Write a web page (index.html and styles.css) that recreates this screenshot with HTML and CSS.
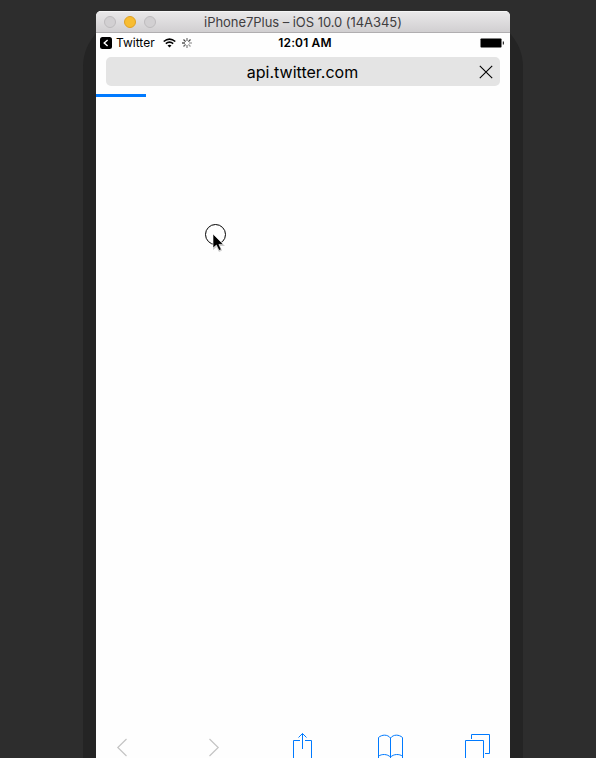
FILE: index.html
```html
<!DOCTYPE html>
<html lang="en">
<head>
<meta charset="utf-8">
<title>iPhone7Plus – iOS 10.0 (14A345)</title>
<link rel="stylesheet" href="styles.css">
</head>
<body>
<main class="device">
  <section class="window">
    <header class="titlebar">
      <div class="lights"><i class="light"></i><i class="light minimize"></i><i class="light"></i></div>
      <span class="title">iPhone7Plus – iOS 10.0 (14A345)</span>
    </header>
    <div class="statusbar">
      <div class="status-left">
        <svg class="back" width="12" height="12" viewBox="0 0 12 12"><rect width="12" height="12" rx="2.5"/><path d="M7.6 3L4.2 6l3.4 3" fill="none" stroke="#fff" stroke-width="1.4"/></svg>
        <span class="app">Twitter</span>
        <svg class="wifi" width="13" height="10" viewBox="0 0 13 10" fill="none" stroke="#000" stroke-width="1.6"><path d="M.7 3.5Q6.5-1.4 12.3 3.5M2.8 5.7q3.7-3 7.4 0"/><path d="M4.5 7.4q2-1.5 4 0l-2 2z" fill="#000" stroke="none"/></svg>
        <svg class="spinner" width="10" height="10" viewBox="-5 -5 10 10" stroke-width="1.3"><path d="M0-2V-5" stroke="#777"/><path d="M1.4-1.4l2.1-2.1" stroke="#444"/><path d="M2 0h3" stroke="#aaa"/><path d="M1.4 1.4l2.1 2.1" stroke="#999"/><path d="M0 2v3" stroke="#888"/><path d="M-1.4 1.4l-2.1 2.1" stroke="#666"/><path d="M-2 0h-3" stroke="#555"/><path d="M-1.4-1.4l-2.1-2.1" stroke="#444"/></svg>
      </div>
      <span class="time">12:01 AM</span>
      <svg class="battery" width="24" height="10" viewBox="0 0 24 10"><rect x=".5" y=".5" width="21" height="9" rx=".8"/><path d="M22.8 3.6h1v3h-1z"/></svg>
    </div>
    <div class="address">
      <span class="url">api.twitter.com</span>
      <svg class="close" width="14" height="14" viewBox="0 0 14 14" stroke="#000" stroke-width="1.1"><path d="M.8.8l12.4 12.4M13.2.8L.8 13.2"/></svg>
    </div>
    <div class="progress"></div>
    <div class="page"></div>
    <nav class="toolbar">
      <svg width="12" height="28" viewBox="0 0 12 28" fill="none" stroke="#c4c4c4" stroke-width="1.2"><path d="M10.5 9L1.8 17.5l8.7 8.5"/></svg>
      <svg width="12" height="28" viewBox="0 0 12 28" fill="none" stroke="#c4c4c4" stroke-width="1.2"><path d="M1.5 9l8.7 8.5L1.5 26"/></svg>
      <svg width="20" height="28" viewBox="0 0 20 28" fill="none" stroke="#007aff"><path d="M7 10.5H.5V30M12 10.5h6.5V30M9.5 19V3.5M5.5 7.5l4-4 4 4"/></svg>
      <svg width="26" height="28" viewBox="0 0 26 28" fill="none" stroke="#007aff"><path d="M.5 30V7.5C4 4.4 9.5 4.2 12.5 8c3-3.8 8.5-3.6 12-.5V30M12.5 8v22M.5 26.2c3-2.4 9-2.4 12 1 3-3.4 9-3.4 12-1"/></svg>
      <svg width="26" height="28" viewBox="0 0 26 28" fill="none" stroke="#007aff"><path d="M6.5 9V4.5h18v19H20M.5 30V10.5h18V30"/></svg>
    </nav>
    <svg class="pointer" width="24" height="29" viewBox="0 0 24 29">
      <circle cx="11.5" cy="11.5" r="10" fill="none" stroke="#000"/>
      <path d="M9 12v15l3.5-3 2.5 5 3-1.5-2-4.5h5z" fill="#ccc"/>
      <path d="M9 11v14l3.4-2.9 2.6 5.4 2.3-1-2.4-5.1h4.4z" stroke="#fff" stroke-width=".6"/>
    </svg>
  </section>
</main>
</body>
</html>
```
FILE: styles.css
```css
* { box-sizing: border-box; }
html, body { height: 100%; overflow: hidden; }
body {
  margin: 0;
  background: #2d2d2d;
  color: #000;
  font-family: Inter, sans-serif;
}
.device {
  position: relative;
  width: 440px;
  height: 758px;
  margin-left: 83px;
  padding: 11px 13px 0;
}
/* phone body behind the simulator window */
.device::before {
  content: "";
  position: absolute;
  inset: 17px 0 0;
  background: #242424;
  border-radius: 50px 50px 0 0;
}
.window {
  position: relative;
  display: flex;
  flex-direction: column;
  height: 747px;
  background: #fefefe;
  border-radius: 5px 5px 0 0;
  overflow: hidden;
}
.titlebar {
  display: grid;
  grid-template-columns: 100px 1fr 100px;
  align-items: center;
  height: 22px;
  background: linear-gradient(#e9e8e9, #d1cfd1);
  border-top: 1px solid #f5f5f5;
  border-bottom: 1px solid #b0aeb0;
}
.lights { display: flex; gap: 8px; padding-left: 8px; }
.light {
  width: 12px;
  height: 12px;
  border: 1px solid #bdbbbd;
  border-radius: 50%;
  background: #d2d0d2;
}
.minimize { background: #f8bd32; border-color: #dfa023; }
.title {
  justify-self: center;
  font: 13px/20px Inter, sans-serif;
  letter-spacing: -0.05px;
  color: #3f3d3f;
  white-space: nowrap;
}
.statusbar {
  display: grid;
  grid-template-columns: 1fr auto 1fr;
  align-items: center;
  height: 20px;
  padding: 0 6px 0 4px;
}
.status-left { display: flex; align-items: center; }
.app { width: 51px; padding-left: 4px; font-size: 12px; line-height: 20px; }
.spinner { margin-left: 6px; }
.time {
  margin-left: 6px;
  font-size: 12px;
  font-weight: 600;
  line-height: 20px;
  letter-spacing: 0.15px;
}
.battery { justify-self: end; }
.address {
  display: grid;
  grid-template-columns: 1fr auto 1fr;
  align-items: center;
  height: 29px;
  margin: 4px 10px 0;
  padding-right: 7px;
  background: #e4e4e4;
  border-radius: 5px;
}
.url { grid-column: 2; padding-left: 6px; font-size: 16px; line-height: 28px; }
.close { justify-self: end; }
.progress { width: 50px; height: 3px; margin-top: 8px; background: #007aff; }
.page { flex: 1; }
.toolbar {
  display: grid;
  grid-template-columns: 92px 85px 85px 87px 26px;
  height: 28px;
  padding-left: 20px;
}
/* mouse pointer with the simulated touch ring */
.pointer { position: absolute; left: 108px; top: 212px; }
```
